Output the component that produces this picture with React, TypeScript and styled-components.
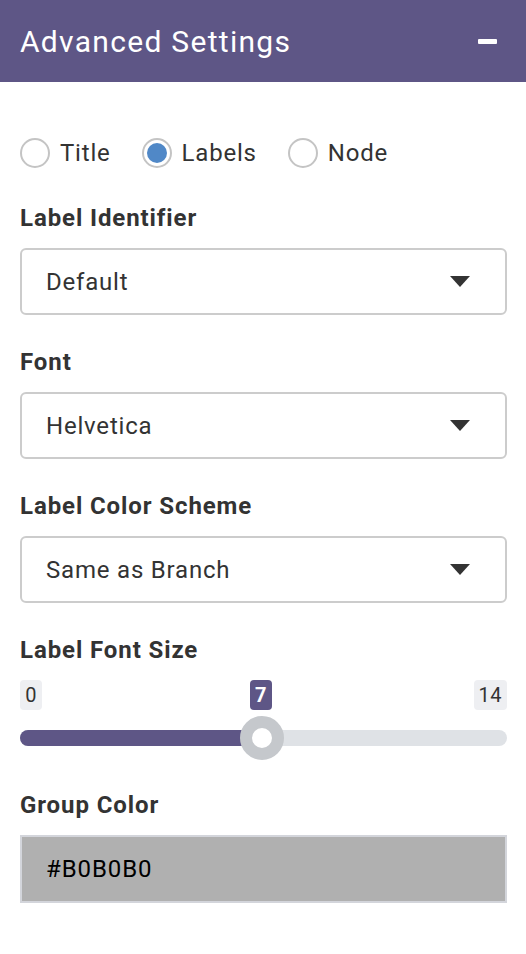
import React from "react";
import styled, { createGlobalStyle } from "styled-components";

const Global = createGlobalStyle`
  html, body { margin: 0; padding: 0; background: #ffffff; }
  body { font-family: Roboto, "Liberation Sans", sans-serif; color: #333333; }
  * { box-sizing: border-box; }
`;

const Panel = styled.div`
  width: 526px;
  height: 954px;
  background: #ffffff;
  display: flex;
  flex-direction: column;
`;

const Header = styled.div`
  height: 82px;
  background: #5e5686;
  display: flex;
  align-items: center;
  justify-content: space-between;
  padding: 0 29px 0 20px;
`;

const Title = styled.h2`
  margin: 0;
  font-size: 30px;
  letter-spacing: 1.3px;
  font-weight: 400;
  color: #ffffff;
`;

const Minus = styled.span`
  width: 19px;
  height: 5px;
  background: #ffffff;
  border-radius: 1px;
`;

const Body = styled.div`
  padding: 0 19px 0 20px;
  display: flex;
  flex-direction: column;
`;

const RadioRow = styled.div`
  display: flex;
  align-items: center;
  gap: 31px;
  margin-top: 56px;
  height: 30px;
`;

const RadioOption = styled.label`
  display: flex;
  align-items: center;
  gap: 10px;
  font-size: 24px;
  letter-spacing: 0.8px;
  color: #333333;
`;

const RadioCircle = styled.span<{ $checked?: boolean }>`
  width: 30px;
  height: 30px;
  border-radius: 50%;
  border: 2px solid #c4c4c4;
  background: #ffffff;
  display: flex;
  align-items: center;
  justify-content: center;
  &::after {
    content: "";
    width: 20px;
    height: 20px;
    border-radius: 50%;
    background: ${(p) => (p.$checked ? "#5088c7" : "transparent")};
  }
`;

const Field = styled.div<{ $top: number }>`
  margin-top: ${(p) => p.$top}px;
  display: flex;
  flex-direction: column;
`;

const Label = styled.div<{ $gap?: number }>`
  font-size: 24px;
  letter-spacing: 0.9px;
  font-weight: 700;
  color: #333333;
  line-height: 26px;
  margin-bottom: ${(p) => p.$gap ?? 17}px;
`;

const Select = styled.div`
  height: 67px;
  border: 2px solid #cccccc;
  border-radius: 6px;
  display: flex;
  align-items: center;
  justify-content: space-between;
  padding: 0 35px 0 24px;
  font-size: 24px;
  letter-spacing: 0.8px;
  color: #333333;
`;

const Caret = styled.span`
  width: 0;
  height: 0;
  border-left: 10px solid transparent;
  border-right: 10px solid transparent;
  border-top: 11px solid #333333;
`;

const SliderWrap = styled.div`
  display: flex;
  flex-direction: column;
  position: relative;
  height: 78px;
`;

const BadgeRow = styled.div`
  position: relative;
  height: 30px;
`;

const Badge = styled.span<{ $active?: boolean }>`
  position: absolute;
  top: 0;
  height: 30px;
  min-width: 22px;
  padding: 0 5px;
  text-align: center;
  border-radius: 4px;
  font-size: 20px;
  line-height: 30px;
  letter-spacing: 0.5px;
  background: ${(p) => (p.$active ? "#5e5686" : "#eeeff2")};
  color: ${(p) => (p.$active ? "#ffffff" : "#333333")};
  font-weight: ${(p) => (p.$active ? 700 : 400)};
`;

const Track = styled.div`
  position: relative;
  margin-top: 20px;
  height: 16px;
  border-radius: 8px;
  background: #dfe2e6;
`;

const Fill = styled.div`
  height: 16px;
  border-radius: 8px 0 0 8px;
  background: #5e5686;
`;

const Thumb = styled.span`
  position: absolute;
  top: 50%;
  width: 44px;
  height: 44px;
  margin: -22px 0 0 -22px;
  border-radius: 50%;
  border: 12px solid #c5c8cc;
  background: #ffffff;
`;

const ColorBox = styled.div`
  height: 68px;
  border: 2px solid #d3d5db;
  background: #b0b0b0;
  display: flex;
  align-items: center;
  padding-left: 24px;
  font-size: 24px;
  letter-spacing: 0.9px;
  color: #000000;
`;

export default function App() {
  const pct = 242 / 487;
  return (
    <Panel>
      <Global />
      <Header>
        <Title>Advanced Settings</Title>
        <Minus />
      </Header>
      <Body>
        <RadioRow>
          <RadioOption><RadioCircle />Title</RadioOption>
          <RadioOption><RadioCircle $checked />Labels</RadioOption>
          <RadioOption><RadioCircle />Node</RadioOption>
        </RadioRow>
        <Field $top={37}>
          <Label>Label Identifier</Label>
          <Select>Default<Caret /></Select>
        </Field>
        <Field $top={34}>
          <Label>Font</Label>
          <Select>Helvetica<Caret /></Select>
        </Field>
        <Field $top={34}>
          <Label>Label Color Scheme</Label>
          <Select>Same as Branch<Caret /></Select>
        </Field>
        <Field $top={34}>
          <Label $gap={17}>Label Font Size</Label>
          <SliderWrap>
            <BadgeRow>
              <Badge style={{ left: 0 }}>0</Badge>
              <Badge $active style={{ left: "230px" }}>7</Badge>
              <Badge style={{ right: 0 }}>14</Badge>
            </BadgeRow>
            <Track>
              <Fill style={{ width: `${pct * 100}%` }} />
              <Thumb style={{ left: `${pct * 100}%` }} />
            </Track>
          </SliderWrap>
        </Field>
        <Field $top={34}>
          <Label $gap={17}>Group Color</Label>
          <ColorBox>#B0B0B0</ColorBox>
        </Field>
      </Body>
    </Panel>
  );
}
